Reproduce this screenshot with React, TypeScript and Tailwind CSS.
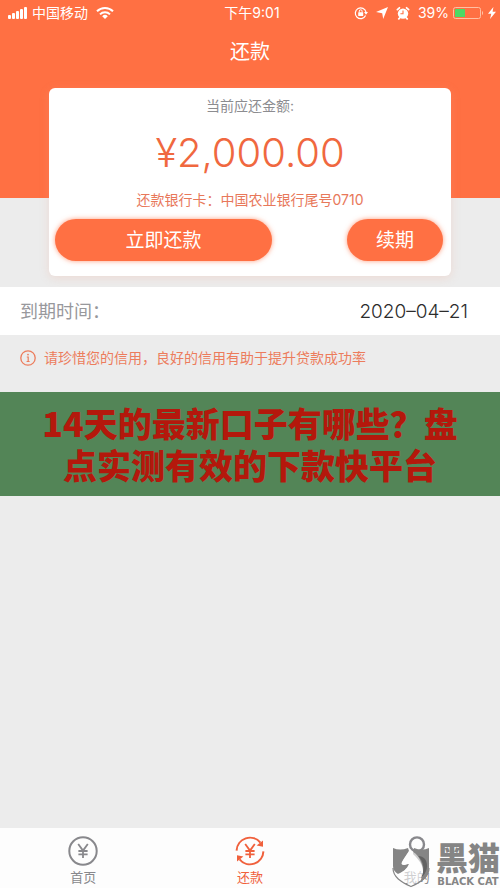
import React, { useState } from "react";

type TabId = "home" | "repay" | "mine";

function StatusBar() {
  return (
    <div className="grid h-[26px] grid-cols-3 items-center pr-1 pl-2 text-sm text-white">
      <div className="flex items-center gap-1">
        <svg className="h-3 w-5" viewBox="0 0 20 12" fill="currentColor">
          <rect x="0" y="8" width="3" height="4" rx="1" />
          <rect x="4" y="6" width="3" height="6" rx="1" />
          <rect x="8" y="4" width="3" height="8" rx="1" />
          <rect x="12" y="2" width="3" height="10" rx="1" />
          <rect x="16" y="0" width="3" height="12" rx="1" />
        </svg>
        <span>中国移动</span>
        <svg
          className="ml-1 h-3 w-[18px]"
          viewBox="0 0 18 12"
          fill="none"
          stroke="currentColor"
          strokeWidth={2}
        >
          <path d="M1 4.3a11.4 11.4 0 0 1 16 0" />
          <path d="M4 7.4a7.1 7.1 0 0 1 10 0" />
          <path d="M9 12 6.2 9.2a4 4 0 0 1 5.6 0z" fill="currentColor" stroke="none" />
        </svg>
      </div>
      <span className="text-center">下午9:01</span>
      <div className="flex items-center justify-end gap-1">
        <svg className="h-[14px] w-[14px]" viewBox="0 0 14 14" fill="none" stroke="currentColor">
          <path d="M11.6 9.6A5.4 5.4 0 1 1 12 6.2" strokeWidth={1.2} />
          <path d="M10 6h4l-2 2.8z" fill="currentColor" stroke="none" />
          <rect x="4.2" y="6.2" width="5" height="3.8" rx="0.5" fill="currentColor" stroke="none" />
          <path d="M5.3 6.5V5.2a1.4 1.4 0 0 1 2.8 0v1.3" />
        </svg>
        <svg className="ml-1 h-3 w-3" viewBox="0 0 12 12" fill="currentColor">
          <path d="M12 0 7.2 12 6.2 6.2 0 5z" />
        </svg>
        <svg className="ml-1 h-[14px] w-[14px]" viewBox="0 0 14 14">
          <circle cx="7" cy="7.6" r="5.2" fill="currentColor" />
          <path
            d="M1.4 3.6 3.4 1.8M12.6 3.6 10.6 1.8M3.6 12l-.8.9M10.4 12l.8.9"
            stroke="currentColor"
            strokeWidth={1.8}
            strokeLinecap="round"
          />
          <path d="M4.4 7.8H7V4.6" fill="none" stroke="#ff7043" strokeWidth={1.1} />
        </svg>
        <span className="ml-1">39%</span>
        <svg className="h-3 w-[31px]" viewBox="0 0 31 12" fill="none">
          <rect x="0.5" y="0.5" width="27" height="11" rx="2" stroke="#ffc0a4" />
          <rect x="2" y="2" width="10" height="8" rx="0.5" fill="#4cd964" />
          <path d="M29 4v4c1.4-.4 1.4-3.6 0-4z" fill="#ffc0a4" />
        </svg>
        <svg className="h-3 w-2" viewBox="0 0 8 12" fill="currentColor">
          <path d="M5.4 0 0 6.8h3.3L2 12l6-7.2H4.6z" />
        </svg>
      </div>
    </div>
  );
}

function YuanIcon() {
  return (
    <svg className="h-[30px] w-[30px]" viewBox="0 0 30 30" fill="none" stroke="currentColor">
      <circle cx="15" cy="15" r="13.7" strokeWidth={2} />
      <path d="m10.2 8 4.8 6.600 4.800-6.600M15 14.600v7.400M10.400 15h9.200M10.400 18.400h9.200" strokeWidth={1.8} />
    </svg>
  );
}

function RepayIcon() {
  return (
    <svg className="h-[30px] w-[30px]" viewBox="0 0 30 30" fill="none" stroke="currentColor">
      <path d="M1.6 14.6A13.4 13.4 0 0 1 25.4 6.6" strokeWidth={2} />
      <path d="M28.4 15.4A13.4 13.4 0 0 1 4.6 23.4" strokeWidth={2} />
      <path d="M28 4.400v6.400l-6.400-1.200zM2 25.600v-6.400l6.400 1.200z" fill="currentColor" stroke="none" />
      <path d="m10.2 8 4.8 6.600 4.800-6.600M15 14.600v7.400M10.400 15h9.200M10.400 18.400h9.200" strokeWidth={1.8} />
    </svg>
  );
}

function PersonIcon() {
  return (
    <svg
      className="h-[30px] w-[30px]"
      viewBox="0 0 30 30"
      fill="none"
      stroke="currentColor"
      strokeWidth={2.4}
    >
      <circle cx="15" cy="8.4" r="7" />
      <path d="M15 15.400c6 0 10 5 11 12.600" />
    </svg>
  );
}

const tabs: { id: TabId; label: string; icon: React.ReactNode }[] = [
  { id: "home", label: "首页", icon: <YuanIcon /> },
  { id: "repay", label: "还款", icon: <RepayIcon /> },
  { id: "mine", label: "我的", icon: <PersonIcon /> },
];

function BlackCatMark() {
  return (
    <div className="pointer-events-none absolute right-0 bottom-0 flex items-end gap-[6px] text-[#858585]">
      <svg className="h-[42px] w-[38px]" viewBox="0 0 38 42">
        {/* shield with the cat's silhouette left open */}
        <path
          d="M1 2q7 3 15 0l1 3c-2 3-5 7-7 11-1 2 0 3 2 3 2-.5 4-1 5-1-2 5-6 8-11 10-3-2-5-4-5-8z"
          fill="currentColor"
        />
        <path d="M22 2q8 3 15 0v20c0 7-4 11-9 14 3-5 4-10 2-16-2-5-5-8-9-12z" fill="currentColor" />
        <path d="M26 10c6 6 7 14 3 22 6-5 8-13 4-19-2-2-4-3-7-3z" fill="#626262" />
        <path
          d="M1 22c0 9 8 14 18 18.500C29 36 37 31 37 22"
          fill="none"
          stroke="currentColor"
          strokeWidth={1.2}
        />
        <path
          d="M17 5l1-2.500 2 3c5 2 8 7 10 13 2 7 0 13-3 17l-8 4C12 36 8 33 6 28c5-2 9-5 11-10-1 0-3 .5-5 1-2 0-3-1-2-3z"
          fill="#fff"
          fillOpacity={0.6}
        />
      </svg>
      <div className="flex flex-col items-center">
        <span className="text-[32px] leading-[34px] font-black">黑猫</span>
        <span className="font-['DejaVu_Sans'] text-[10px] leading-3 font-bold">BLACK CAT</span>
      </div>
    </div>
  );
}

export default function App() {
  const [activeTab, setActiveTab] = useState<TabId>("repay");

  return (
    <div className="flex min-h-screen flex-col bg-[#ececec] font-[Inter,'Noto_Sans_CJK_SC',sans-serif]">
      <header className="h-[198px] bg-[#ff7043]">
        <StatusBar />
        <h1 className="pt-[11px] text-center text-xl leading-[30px] text-white">还款</h1>
      </header>

      <main className="-mt-[110px] flex flex-1 flex-col">
        {/* Amount card */}
        <section className="mx-[49px] flex h-[188px] flex-col items-center rounded-md bg-white px-[6px] pt-2 shadow-[0_2px_10px_#f0a58a40]">
          <p className="text-sm leading-5 text-[#8c8c90]">当前应还金额:</p>
          <p className="mt-3 text-[40px] leading-[50px] font-light text-[#f0683f]">¥2,000.00</p>
          <p className="mt-3 text-sm leading-5 text-[#e8785a]">
            还款银行卡：中国农业银行尾号0710
          </p>
          <div className="mt-[9px] flex w-full justify-between pr-[2px] text-[19px] text-white">
            <button className="h-[42px] w-[217px] rounded-full bg-[#ff7043] pt-[2px] shadow-[0_0_5px_#ff7043b0]">
              立即还款
            </button>
            <button className="h-[42px] w-24 rounded-full bg-[#ff7043] pt-[2px] shadow-[0_0_5px_#ff7043b0]">
              续期
            </button>
          </div>
        </section>

        <dl className="mt-[11px] flex h-12 items-center justify-between bg-white pt-[2px] pr-8 pl-5 text-lg">
          <dt className="text-[#98989c]">到期时间：</dt>
          <dd className="text-[19px] font-light text-[#2c2c2c]">2020–04–21</dd>
        </dl>

        <div className="flex h-[57px] items-start gap-2 px-5 pt-3 text-[#ec7c5c]">
          <svg className="mt-[3px] h-4 w-4" viewBox="0 0 16 16" fill="none" stroke="currentColor">
            <circle cx="8" cy="8" r="7.2" strokeWidth={1.3} />
            <path d="M6.8 7h1.400v4.500M6.600 11.500h3" strokeWidth={1.2} />
            <circle cx="8" cy="4.6" r="0.9" fill="currentColor" stroke="none" />
          </svg>
          <p className="text-sm leading-[22px]">
            请珍惜您的信用，良好的信用有助于提升贷款成功率
          </p>
        </div>

        <h2 className="bg-[#538557] px-8 py-[10px] text-center font-['Noto_Sans_CJK_SC',sans-serif] text-[34px] leading-[42px] font-black text-[#b4180c]">
          14天的最新口子有哪些？盘点实测有效的下款快平台
        </h2>
      </main>

      <nav className="relative grid h-[60px] grid-cols-3 bg-[#fdfdfd]">
        {tabs.map((tab) => (
          <button
            key={tab.id}
            onClick={() => setActiveTab(tab.id)}
            className={`flex flex-col items-center gap-[2px] pt-2 text-[13px] leading-[18px] ${
              activeTab === tab.id ? "text-[#f0603c]" : "text-[#88888c]"
            }`}
          >
            {tab.icon}
            {tab.label}
          </button>
        ))}
        <BlackCatMark />
      </nav>
    </div>
  );
}
